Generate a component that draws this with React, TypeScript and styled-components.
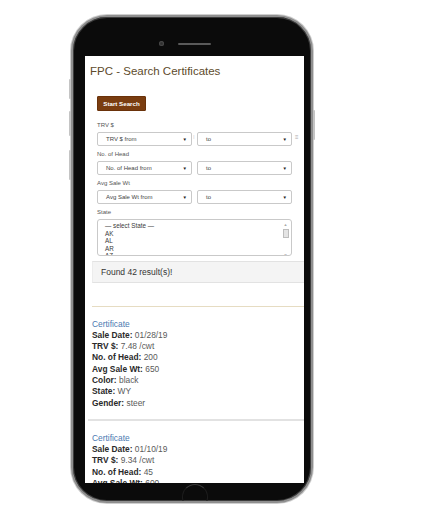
import { FC } from "react";
import styled, { createGlobalStyle } from "styled-components";

const GlobalStyle = createGlobalStyle`
  html, body {
    margin: 0;
    padding: 0;
    background: #ffffff;
  }
  * {
    box-sizing: border-box;
  }
`;

interface ICertificate {
  saleDate: string;
  trv: string;
  head: string;
  weight: string;
  color: string;
  state: string;
  gender: string;
}

const certificates: ICertificate[] = [
  {
    saleDate: "01/28/19",
    trv: "7.48 /cwt",
    head: "200",
    weight: "650",
    color: "black",
    state: "WY",
    gender: "steer",
  },
  {
    saleDate: "01/10/19",
    trv: "9.34 /cwt",
    head: "45",
    weight: "600",
    color: "black",
    state: "MT",
    gender: "heifer",
  },
];

const ranges = [
  { label: "TRV $", from: "TRV $ from", extras: true },
  { label: "No. of Head", from: "No. of Head from", extras: false },
  { label: "Avg Sale Wt", from: "Avg Sale Wt from", extras: false },
];

const states = ["— select State —", "AK", "AL", "AR", "AZ"];

const CertificateCard: FC<{ cert: ICertificate }> = ({ cert }) => (
  <Card>
    <CardLink>Certificate</CardLink>
    <Line>
      <b>Sale Date:</b> {cert.saleDate}
    </Line>
    <Line>
      <b>TRV $:</b> {cert.trv}
    </Line>
    <Line>
      <b>No. of Head:</b> {cert.head}
    </Line>
    <Line>
      <b>Avg Sale Wt:</b> {cert.weight}
    </Line>
    <Line>
      <b>Color:</b> {cert.color}
    </Line>
    <Line>
      <b>State:</b> {cert.state}
    </Line>
    <Line>
      <b>Gender:</b> {cert.gender}
    </Line>
  </Card>
);

export default function App() {
  return (
    <>
      <GlobalStyle />
      <Stage>
        <Phone>
          <SideButton $side="left" $top={62} $height={20} />
          <SideButton $side="left" $top={94} $height={25} />
          <SideButton $side="left" $top={133} $height={30} />
          <SideButton $side="right" $top={93} $height={30} />
          <TopBezel>
            <Camera />
            <Speaker />
          </TopBezel>
          <Screen>
            <Title>FPC - Search Certificates</Title>
            <SearchButton>Start Search</SearchButton>
            <Form>
              {ranges.map((r) => (
                <Field key={r.label}>
                  <FieldLabel>{r.label}</FieldLabel>
                  <SelectRow>
                    <Select>
                      <span>{r.from}</span>
                      <Caret>▼</Caret>
                    </Select>
                    <Select>
                      <span>to</span>
                      <Caret>▼</Caret>
                    </Select>
                    {r.extras && (
                      <>
                        <Mark $left={96}>⁞</Mark>
                        <Mark $left={198}>≡</Mark>
                      </>
                    )}
                  </SelectRow>
                </Field>
              ))}
              <Field>
                <FieldLabel>State</FieldLabel>
                <ListBox>
                  <ListItems>
                    {states.map((s) => (
                      <div key={s}>{s}</div>
                    ))}
                  </ListItems>
                  <ScrollBar>
                    <ScrollArrow $light>▲</ScrollArrow>
                    <Thumb />
                    <ScrollArrow>▼</ScrollArrow>
                  </ScrollBar>
                </ListBox>
              </Field>
            </Form>
            <ResultBar>Found 42 result(s)!</ResultBar>
            <GoldRule />
            {certificates.map((c, i) => (
              <div key={c.saleDate}>
                {i > 0 && <Separator />}
                <CertificateCard cert={c} />
              </div>
            ))}
          </Screen>
          <BottomBezel>
            <HomeButton />
          </BottomBezel>
        </Phone>
      </Stage>
    </>
  );
}

const Stage = styled.div`
  width: 423px;
  height: 512px;
  padding: 15px 0 0 71px;
  font-family: "Liberation Sans", Arial, sans-serif;
`;

const Phone = styled.div`
  position: relative;
  width: 242px;
  height: 488px;
  border-radius: 36px;
  background: #0b0b0b;
  border: 2px solid #8f8f8f;
  box-shadow: inset 0 0 0 1px #3c3c3c, 0 0 0 1px #cfcfcf;
  padding: 0 7px 0 12px;
  display: flex;
  flex-direction: column;
`;

const SideButton = styled.div<{ $side: "left" | "right"; $top: number; $height: number }>`
  position: absolute;
  ${({ $side }) => ($side === "left" ? "left: -4px;" : "right: -4px;")}
  top: ${({ $top }) => $top}px;
  height: ${({ $height }) => $height}px;
  width: 2px;
  border-radius: 1px;
  background: #c4c4c4;
`;

const TopBezel = styled.div`
  height: 39px;
  flex: none;
  display: grid;
  grid-template-columns: 1fr auto 1fr;
  align-items: center;
  align-content: start;
  padding-top: 24px;
`;

const Camera = styled.div`
  justify-self: end;
  margin-right: 14px;
  width: 5px;
  height: 5px;
  border-radius: 50%;
  background: #2e2e2e;
  box-shadow: inset 0 0 1px 1px #4a4a4a;
`;

const Speaker = styled.div`
  width: 33px;
  height: 2px;
  border-radius: 1px;
  background: #5a5a5a;
`;

const Screen = styled.div`
  flex: none;
  height: 427px;
  background: #ffffff;
  overflow: hidden;
  color: #333;
`;

const BottomBezel = styled.div`
  flex: 1;
  display: flex;
  justify-content: center;
  overflow: hidden;
  padding-top: 1px;
`;

const HomeButton = styled.div`
  width: 26px;
  height: 26px;
  flex: none;
  border-radius: 50%;
  border: 1px solid #1d1d1d;
  border-top-color: #3a3a3a;
`;

const Title = styled.div`
  padding: 9px 0 0 5px;
  font-size: 11.5px;
  line-height: 13px;
  color: #5e4b2c;
`;

const SearchButton = styled.div`
  margin: 18px 0 0 12px;
  width: 49px;
  height: 15px;
  background: #7a3d10;
  border: 1px solid #6a320a;
  border-radius: 1px;
  color: #ffffff;
  font-size: 6.2px;
  font-weight: bold;
  display: flex;
  align-items: center;
  justify-content: center;
`;

const Form = styled.div`
  margin: 10px 0 0 12px;
  width: 195px;
  display: flex;
  flex-direction: column;
  gap: 4px;
`;

const Field = styled.div`
  display: flex;
  flex-direction: column;
`;

const FieldLabel = styled.div`
  font-size: 6px;
  line-height: 8px;
  color: #555;
  margin-bottom: 3px;
`;

const SelectRow = styled.div`
  position: relative;
  display: grid;
  grid-template-columns: 95px 95px;
  gap: 5px;
`;

const Select = styled.div`
  height: 14px;
  border: 1px solid #c9c9c9;
  border-radius: 2px;
  background: #fff;
  padding: 0 4px 0 8px;
  display: flex;
  align-items: center;
  justify-content: space-between;
  font-size: 6px;
  color: #444;
`;

const Caret = styled.span`
  font-size: 4.5px;
  color: #222;
`;

const Mark = styled.span<{ $left: number }>`
  position: absolute;
  top: 2px;
  left: ${({ $left }) => $left}px;
  font-size: 6px;
  line-height: 6px;
  color: #aaa;
`;

const ListBox = styled.div`
  height: 37px;
  border: 1px solid #c9c9c9;
  border-radius: 3px;
  display: grid;
  grid-template-columns: 1fr 9px;
  overflow: hidden;
`;

const ListItems = styled.div`
  padding: 2px 0 0 7px;
  font-size: 6.3px;
  line-height: 7.5px;
  color: #3a3a3a;
`;

const ScrollBar = styled.div`
  display: flex;
  flex-direction: column;
  align-items: center;
  padding: 2px 2px 2px 0;
  gap: 2px;
`;

const ScrollArrow = styled.div<{ $light?: boolean }>`
  font-size: 4px;
  line-height: 5px;
  color: ${({ $light }) => ($light ? "#aaa" : "#222")};
  &:last-child {
    margin-top: auto;
  }
`;

const Thumb = styled.div`
  width: 6px;
  height: 9px;
  border: 1px solid #bdbdbd;
  background: #e4e4e4;
`;

const ResultBar = styled.div`
  margin: 5px 0 0 7px;
  height: 22px;
  background: #f4f4f4;
  border-top: 1px solid #e2e2e2;
  border-bottom: 1px solid #e2e2e2;
  border-left: 1px solid #ececec;
  padding-left: 8px;
  display: flex;
  align-items: center;
  font-size: 8.5px;
  color: #333;
`;

const GoldRule = styled.div`
  margin: 23px 0 0 7px;
  height: 1px;
  background: #e6dcc2;
`;

const Separator = styled.div`
  margin-left: 3px;
  height: 2px;
  background: #e2e2e2;
`;

const Card = styled.div`
  padding: 11.5px 0 10.5px 7px;
  font-size: 8.4px;
  line-height: 11.3px;
`;

const CardLink = styled.div`
  color: #4b79b1;
`;

const Line = styled.div`
  color: #5a5a5a;
  b {
    color: #2a2a2a;
    font-weight: bold;
  }
`;
